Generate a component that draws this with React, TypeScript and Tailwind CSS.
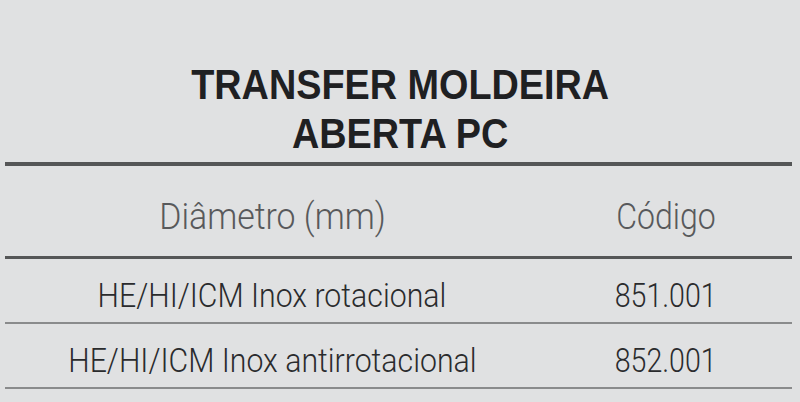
import React from "react";

const rows = [
  { name: "HE/HI/ICM Inox rotacional", code: "851.001" },
  { name: "HE/HI/ICM Inox antirrotacional", code: "852.001" },
];

export default function App() {
  return (
    <div className="w-[800px] h-[402px] overflow-hidden bg-[#e0e1e2]">
      <div
        className="pt-[60px] text-center text-[42px] leading-[49px] font-bold text-[#1f2022]"
        style={{ fontFamily: '"Liberation Sans", Arial, sans-serif' }}
      >
        <span className="inline-block scale-x-[0.9]">TRANSFER MOLDEIRA</span>
        <br />
        <span className="inline-block scale-x-[0.9]">ABERTA PC</span>
      </div>
      <div
        className="mx-[5px] mt-[4px] w-[787px] border-t-[4px] border-[#555657]"
        style={{ fontFamily: 'Roboto, "Liberation Sans", sans-serif' }}
      >
        <div className="grid grid-cols-[534px_1fr] h-[93px] border-b-[3px] border-[#555657] font-light text-[36px] leading-[36px] text-[#58595b]">
          <div className="pt-[33px] text-center">
            <span className="inline-block scale-x-[0.94]">Diâmetro (mm)</span>
          </div>
          <div className="pt-[33px] text-center">
            <span className="inline-block scale-x-[0.89]">Código</span>
          </div>
        </div>
        {rows.map((r) => (
          <div
            key={r.code}
            className="grid grid-cols-[534px_1fr] h-[65px] border-b-[2px] border-[#8a8b8c] font-light text-[34px] leading-[34px] text-[#2a2b2d]"
          >
            <div className="pt-[19px] text-center">
              <span className="inline-block scale-x-[0.89]">{r.name}</span>
            </div>
            <div className="pt-[19px] text-center">
              <span className="inline-block scale-x-[0.84]">{r.code}</span>
            </div>
          </div>
        ))}
      </div>
    </div>
  );
}
